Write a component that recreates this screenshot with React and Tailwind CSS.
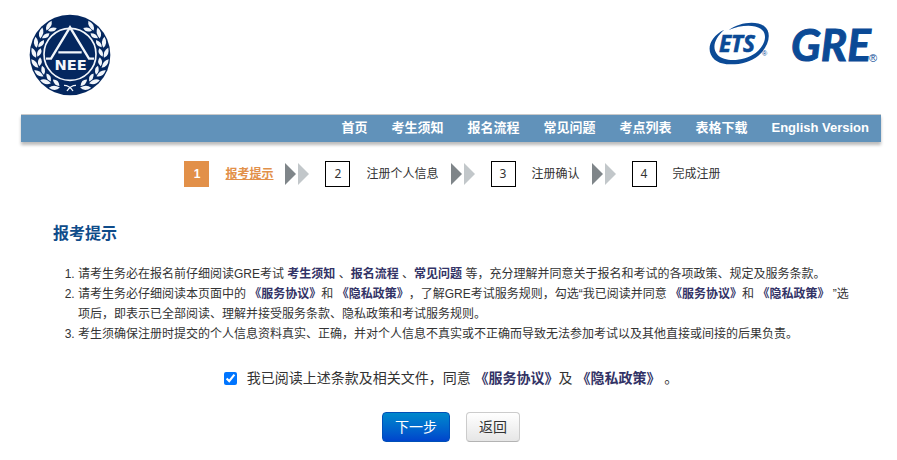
const navItems = ['首页', '考生须知', '报名流程', '常见问题', '考点列表', '表格下载', 'English Version'];
const steps = ['报考提示', '注册个人信息', '注册确认', '完成注册'];
const leafAngles = [20, 37, 54, 71, 88, 105, 122, 139];

// Left branch of the wreath: leaf pairs turned around the centre of the seal.
function Laurel() {
  return leafAngles.map((angle) => (
    <g key={angle} transform={`rotate(${angle} 150 149)`}>
      <path d="M155 251Q147 269 124 263Q133 247 155 251Z" />
      <path d="M152 247Q137 252 127 236Q143 229 152 247Z" />
    </g>
  ));
}

function NeeaLogo() {
  return (
    <svg className="size-[82px]" viewBox="27 26 246 246" role="img" aria-label="NEEA">
      <circle cx="150" cy="149" r="121" fill="#04275f" />
      <g fill="#f2f6fb">
        <Laurel />
        <g transform="translate(300 0) scale(-1 1)">
          <Laurel />
        </g>
      </g>
      <g fill="none" stroke="#f2f6fb">
        <path d="M132 240Q148 240 159 257M168 240Q152 240 141 257" strokeWidth="4" />
        <circle cx="150" cy="147" r="78" strokeWidth="5" />
        <path d="M78 160H93L150 66L207 160H222M115 141H185" strokeWidth="7" />
      </g>
      <text
        x="152"
        y="193"
        textAnchor="middle"
        fill="#f2f6fb"
        className="font-['DejaVu_Sans'] text-[44px] font-bold"
      >
        NEE
      </text>
    </svg>
  );
}

function EtsLogo() {
  return (
    <svg className="h-[44px] w-[64px] overflow-visible" viewBox="0 0 192 132" role="img" aria-label="ETS">
      <g fill="#0b4a96">
        <path d="M62 24C92 3 141-6 168 12C193 30 184 73 151 101C116 130 48 136 20 113C-8 88 3 45 49 23C20 48 10 78 29 99C51 122 109 118 143 93C172 71 181 36 158 20C137 6 96 9 62 24Z" />
        <text
          x="33"
          y="89"
          stroke="#0b4a96"
          strokeWidth="2"
          className="font-['Noto_Sans'] text-[67px] font-bold italic"
        >
          ETS
        </text>
        <text x="162" y="103" className="font-['Liberation_Sans'] text-[21px]">
          ®
        </text>
      </g>
    </svg>
  );
}

function GreLogo() {
  return (
    <svg className="h-[44px] w-[90px] overflow-visible" viewBox="0 0 90 44" role="img" aria-label="GRE">
      <g fill="#0b4a96">
        <text
          x="1"
          y="39"
          stroke="#0b4a96"
          strokeWidth="1"
          className="font-['Lato'] text-[44px] font-bold italic"
        >
          GRE
        </text>
        <text x="79" y="40" className="font-['Liberation_Sans'] text-[11px]">
          ®
        </text>
      </g>
    </svg>
  );
}

function StepArrows() {
  return (
    <svg className="h-[22px] w-6" viewBox="0 0 24 22" aria-hidden="true">
      <path d="M0 0L11 11L0 22Z" fill="#7f8589" />
      <path d="M13 0L24 11L13 22Z" fill="#c2c7ca" />
    </svg>
  );
}

function Doc({ children }) {
  return (
    <a href="#" className="font-bold text-[#333366]">
      {children}
    </a>
  );
}

export default function App() {
  return (
    <div className="bg-white pr-4 pl-[21px] font-['Liberation_Sans','Noto_Sans_CJK_SC',sans-serif] text-xs text-[#333] [text-spacing-trim:space-all]">
      <header>
        <div className="flex h-[114px] items-start justify-between pt-[14px] pr-px pl-2">
          <NeeaLogo />
          <div className="flex gap-[18px] pt-2">
            <EtsLogo />
            <GreLogo />
          </div>
        </div>
        <nav className="flex h-7 items-center justify-end gap-6 border-t border-[#c9c9c9] bg-[#6192ba] pr-3 pb-0.5 text-[13px] font-bold text-white shadow-[0_3px_3px_#bbb]">
          {navItems.map((item) => (
            <a key={item} href="#">
              {item}
            </a>
          ))}
        </nav>
      </header>

      <ol className="mt-[19px] flex justify-center pl-[3px]">
        {steps.map((step, index) => (
          <li key={step} className="flex items-center">
            <span
              className={
                index === 0
                  ? 'flex h-[26px] w-[25px] items-center justify-center bg-[#e29049] font-bold text-white'
                  : "flex h-[26px] w-[25px] items-center justify-center border border-black font-['Noto_Sans']"
              }
            >
              {index + 1}
            </span>
            <span className={index === 0 ? 'ml-4 font-bold text-[#e29049] underline' : 'ml-4'}>
              {step}
            </span>
            {index < steps.length - 1 && (
              <span className="mr-4 ml-3">
                <StepArrows />
              </span>
            )}
          </li>
        ))}
      </ol>

      <main className="pr-7 pl-8">
        <h1 className="mt-[35px] text-base font-bold text-[#0f4c8a]">报考提示</h1>
        <ol className="mt-[18px] list-decimal pl-[25px] leading-5">
          <li>
            请考生务必在报名前仔细阅读GRE考试 <Doc>考生须知</Doc> 、<Doc>报名流程</Doc> 、
            <Doc>常见问题</Doc> 等，充分理解并同意关于报名和考试的各项政策、规定及服务条款。
          </li>
          <li>
            请考生务必仔细阅读本页面中的 <Doc>《服务协议》</Doc>和 <Doc>《隐私政策》</Doc>
            ，了解GRE考试服务规则，勾选“我已阅读并同意 <Doc>《服务协议》</Doc>和{' '}
            <Doc>《隐私政策》</Doc> ”选项后，即表示已全部阅读、理解并接受服务条款、隐私政策和考试服务规则。
          </li>
          <li>
            考生须确保注册时提交的个人信息资料真实、正确，并对个人信息不真实或不正确而导致无法参加考试以及其他直接或间接的后果负责。
          </li>
        </ol>
      </main>

      <form className="mt-6 text-sm" onSubmit={(event) => event.preventDefault()}>
        <div className="flex items-center justify-center">
          <input id="agree" type="checkbox" defaultChecked className="mr-2.5 size-[13px]" />
          <label htmlFor="agree">
            我已阅读上述条款及相关文件，同意 <Doc>《服务协议》</Doc>及 <Doc>《隐私政策》</Doc> 。
          </label>
        </div>
        <div className="mt-6 flex justify-center gap-4">
          <button
            type="submit"
            className="h-[30px] rounded border border-[#0050b8] bg-linear-to-b from-[#0088cc] to-[#0044cc] px-3 text-white"
          >
            下一步
          </button>
          <button
            type="button"
            className="h-[30px] rounded border border-[#ccc] border-b-[#b3b3b3] bg-linear-to-b from-white to-[#e6e6e6] px-3"
          >
            返回
          </button>
        </div>
      </form>
    </div>
  );
}
